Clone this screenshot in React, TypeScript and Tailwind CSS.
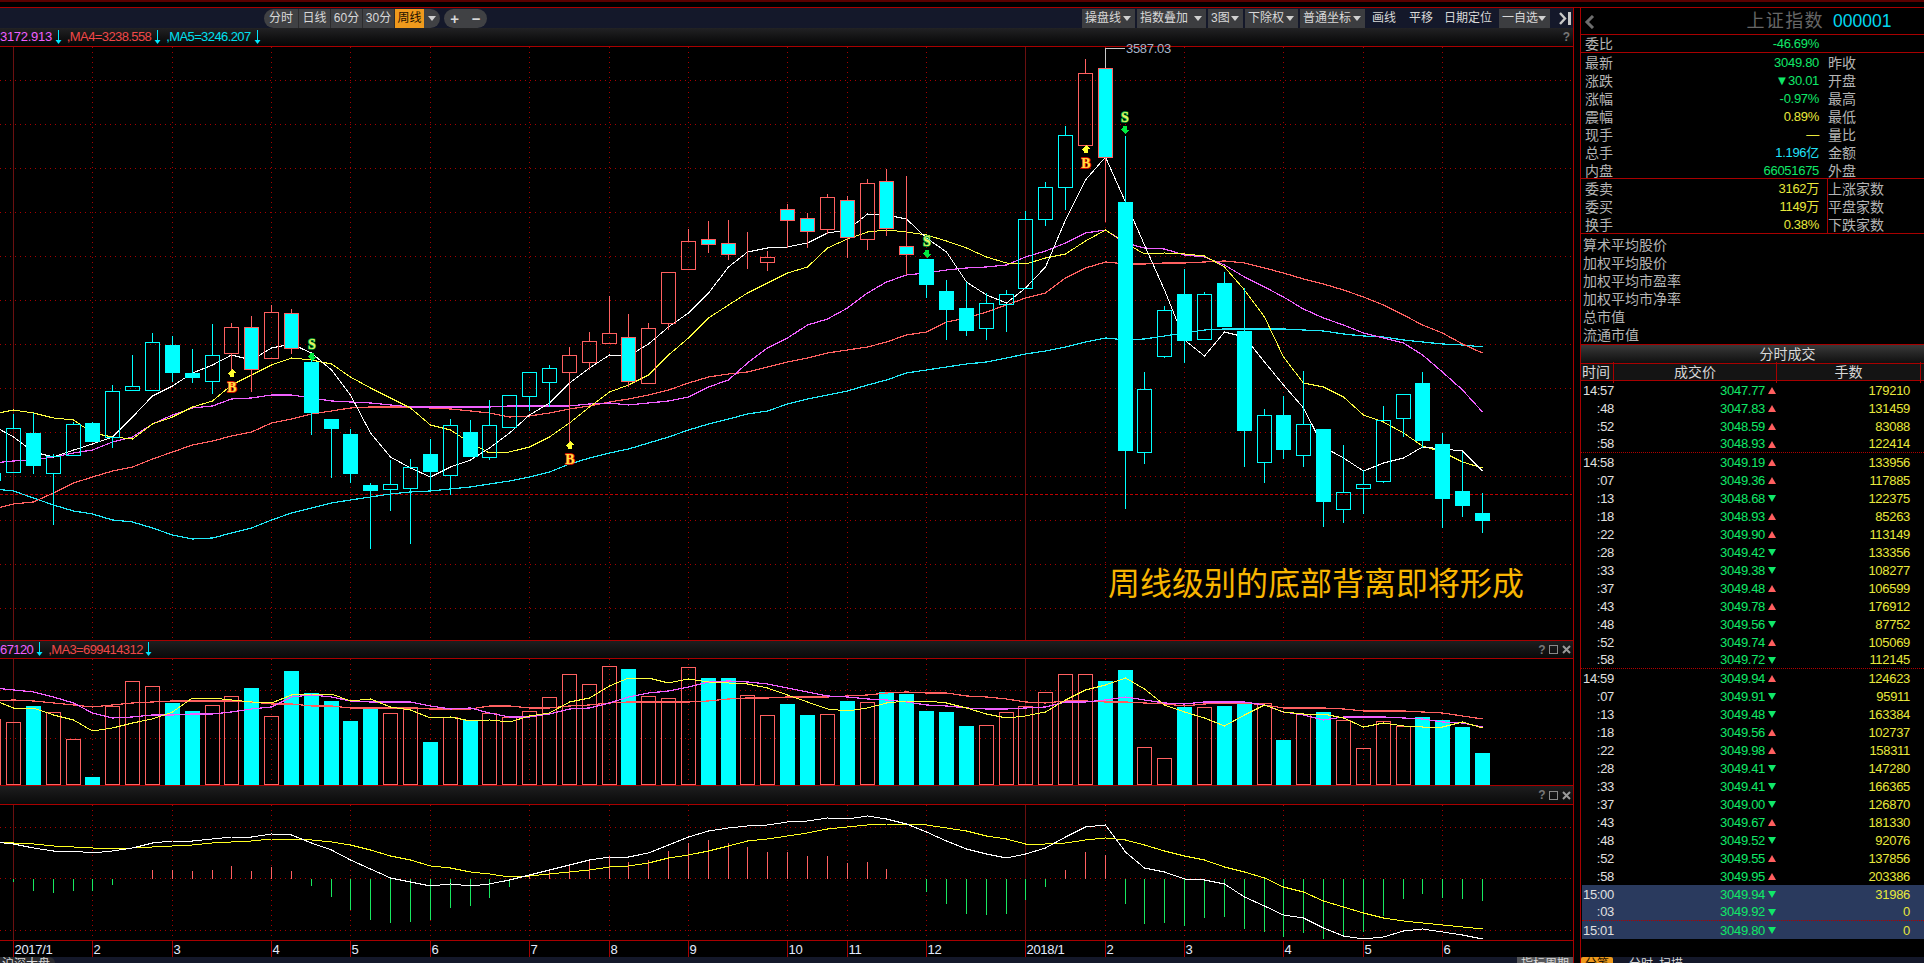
import React from "react";

// x position of weekly bar i (i = -1 is the partial bar on the left edge)
const xAt = (i: number) => Math.floor(13.5 + 19.85 * i) + 0.5;
const RED = "#a80000";
const UP = "#ff6060";
const CYAN = "#00ffff";

// c = hollow cyan, f = solid cyan, r = hollow red, m = cyan with red outline
type Candle = [string, number, number, number, number];
const candles: Candle[] = [
  ["c", 473, 480, 473, 480],
  ["c", 428, 472, 414, 472], ["f", 433, 466, 413, 474], ["c", 456, 473, 454, 525], ["c", 424, 455, 422, 455],
  ["f", 423, 442, 422, 442], ["c", 391, 437, 385, 448], ["c", 386, 390, 355, 390], ["c", 342, 390, 333, 390],
  ["f", 345, 373, 336, 382], ["f", 373, 378, 349, 383], ["c", 355, 381, 324, 394], ["r", 327, 353, 323, 372],
  ["m", 327, 369, 316, 392], ["r", 312, 358, 305, 359], ["m", 313, 348, 309, 354], ["f", 362, 413, 360, 435],
  ["f", 419, 429, 419, 478], ["f", 434, 474, 429, 483], ["f", 485, 491, 483, 549], ["c", 484, 489, 460, 511],
  ["c", 467, 488, 459, 544], ["f", 454, 472, 439, 492], ["c", 425, 475, 419, 495], ["f", 432, 457, 420, 457],
  ["c", 425, 457, 400, 460], ["c", 395, 427, 395, 427], ["c", 372, 396, 372, 411], ["c", 368, 382, 365, 407],
  ["r", 355, 372, 347, 442], ["r", 341, 362, 332, 370], ["r", 333, 343, 296, 343], ["m", 337, 381, 314, 387],
  ["r", 328, 383, 323, 383], ["r", 272, 323, 272, 330], ["r", 241, 269, 229, 269], ["m", 239, 244, 221, 253],
  ["m", 243, 254, 220, 260], ["r", 254, 254, 232, 269], ["r", 257, 262, 251, 271], ["m", 209, 220, 204, 248],
  ["m", 218, 231, 213, 248], ["r", 197, 229, 194, 234], ["m", 200, 237, 196, 258], ["r", 183, 239, 179, 250],
  ["m", 181, 228, 169, 236], ["m", 246, 254, 176, 275], ["f", 259, 285, 259, 298], ["f", 291, 310, 280, 340],
  ["f", 308, 331, 282, 336], ["c", 303, 328, 293, 340], ["c", 294, 304, 290, 332], ["c", 219, 288, 211, 288],
  ["c", 187, 219, 182, 226], ["c", 135, 187, 126, 210], ["r", 73, 145, 59, 145], ["m", 68, 157, 48, 222],
  ["f", 202, 451, 136, 509], ["c", 389, 452, 372, 464], ["c", 310, 356, 306, 358], ["f", 294, 341, 269, 363],
  ["c", 294, 339, 292, 339], ["f", 283, 327, 272, 327], ["f", 331, 431, 288, 467], ["c", 415, 462, 409, 483],
  ["f", 415, 450, 396, 459], ["c", 424, 455, 371, 467], ["f", 429, 502, 429, 527], ["c", 492, 509, 445, 523],
  ["c", 484, 488, 470, 514], ["c", 420, 481, 406, 483], ["c", 394, 418, 394, 437], ["f", 383, 441, 372, 448],
  ["f", 444, 499, 433, 528], ["f", 491, 506, 452, 517], ["f", 513, 521, 493, 533],
];

const ma1 = [426, 437, 452, 457, 450, 444, 437, 417, 396, 386, 373, 365, 355, 360, 348, 344, 353, 370, 395, 433, 457, 468, 477, 467, 460, 448, 433, 415, 403, 383, 368, 355, 356, 344, 327, 313, 293, 267, 252, 248, 247, 243, 233, 230, 214, 215, 219, 238, 252, 282, 295, 303, 288, 267, 220, 180, 157, 202, 245, 290, 340, 356, 332, 337, 362, 385, 408, 447, 458, 471, 463, 458, 447, 449, 451, 471];
const ma2 = [414, 410, 413, 418, 420, 433, 437, 439, 424, 417, 407, 401, 385, 375, 365, 358, 360, 364, 377, 388, 398, 408, 425, 430, 443, 453, 452, 447, 437, 423, 407, 392, 385, 375, 355, 338, 318, 305, 293, 283, 273, 267, 248, 239, 232, 230, 232, 235, 241, 248, 257, 263, 264, 258, 254, 241, 230, 243, 254, 253, 254, 256, 267, 290, 317, 357, 383, 387, 397, 415, 422, 433, 446, 452, 462, 468];
const ma3 = [463, 461, 460, 457, 453, 450, 442, 437, 424, 415, 408, 406, 399, 398, 395, 395, 398, 401, 402, 403, 405, 407, 407, 407, 407, 407, 406, 406, 406, 406, 404, 403, 405, 403, 401, 397, 387, 380, 363, 348, 338, 325, 319, 308, 293, 282, 275, 273, 270, 268, 267, 265, 257, 251, 243, 233, 230, 243, 248, 249, 255, 257, 265, 277, 287, 297, 309, 318, 325, 333, 338, 343, 355, 372, 390, 412];
const ma4 = [509, 504, 502, 493, 483, 477, 471, 467, 459, 452, 445, 441, 436, 432, 423, 419, 414, 411, 408, 407, 407, 407, 408, 409, 411, 413, 417, 416, 413, 409, 406, 402, 399, 395, 390, 383, 377, 374, 372, 367, 362, 358, 353, 350, 347, 342, 335, 332, 322, 318, 312, 305, 298, 293, 278, 268, 262, 264, 264, 263, 263, 262, 261, 263, 268, 273, 279, 284, 290, 297, 305, 315, 325, 333, 344, 353];
const ma5 = [489, 491, 498, 505, 511, 514, 520, 522, 528, 535, 539, 538, 533, 528, 520, 513, 508, 503, 500, 497, 494, 492, 491, 489, 487, 484, 481, 477, 472, 464, 458, 453, 449, 443, 437, 430, 424, 419, 414, 411, 404, 399, 395, 391, 385, 380, 373, 370, 367, 364, 362, 358, 354, 351, 347, 342, 338, 340, 339, 336, 333, 330, 329, 329, 329, 329, 330, 331, 334, 336, 337, 340, 342, 344, 345, 347];

// Volume bars, the listed indexes are solid cyan and the rest hollow red
const volTops = [719, 722, 706, 712, 739, 777, 706, 681, 686, 703, 711, 705, 696, 688, 716, 671, 693, 701, 721, 707, 713, 707, 742, 717, 720, 713, 717, 711, 697, 674, 684, 666, 669, 696, 698, 667, 678, 678, 695, 715, 704, 715, 714, 701, 702, 692, 694, 711, 712, 726, 725, 712, 706, 692, 674, 674, 681, 670, 747, 758, 707, 707, 706, 702, 703, 740, 714, 712, 720, 748, 721, 726, 717, 720, 727, 753];
const volSolid = new Set([1, 4, 8, 9, 12, 14, 15, 16, 17, 18, 21, 23, 31, 35, 36, 39, 40, 42, 44, 45, 46, 47, 48, 55, 56, 59, 61, 62, 64, 66, 71, 72, 73, 74]);
const volYellow = [700, 708, 708, 715, 720, 731, 728, 723, 719, 712, 698, 698, 700, 702, 703, 695, 694, 694, 701, 699, 707, 710, 718, 717, 721, 720, 722, 716, 713, 702, 698, 686, 678, 678, 683, 679, 682, 683, 684, 688, 695, 702, 709, 711, 708, 703, 701, 701, 703, 708, 714, 718, 716, 712, 700, 690, 685, 678, 689, 705, 712, 718, 726, 715, 705, 712, 714, 714, 718, 727, 723, 726, 727, 727, 722, 728];
const volPink = [688, 690, 692, 697, 703, 713, 718, 717, 715, 715, 714, 714, 712, 709, 707, 697, 695, 697, 701, 702, 702, 702, 706, 709, 708, 713, 717, 717, 714, 709, 708, 703, 697, 693, 691, 687, 682, 681, 682, 684, 688, 692, 696, 697, 699, 700, 702, 705, 706, 708, 709, 709, 708, 707, 702, 702, 700, 697, 700, 703, 704, 702, 702, 702, 705, 712, 715, 720, 717, 717, 717, 718, 719, 722, 723, 727];
const volRed = [701, 700, 701, 703, 705, 707, 705, 703, 702, 701, 701, 701, 701, 702, 704, 704, 706, 706, 708, 708, 708, 708, 709, 709, 709, 706, 706, 708, 708, 706, 705, 703, 702, 702, 702, 702, 701, 699, 698, 698, 697, 697, 697, 696, 695, 693, 692, 693, 693, 696, 697, 699, 702, 703, 701, 701, 702, 702, 703, 704, 706, 704, 703, 703, 705, 708, 708, 708, 709, 711, 711, 711, 712, 713, 716, 719];

const macdWhite = [842, 844, 848, 851, 851, 853, 851, 848, 843, 841, 841, 839, 837, 837, 834, 835, 843, 850, 860, 869, 878, 882, 886, 884, 886, 884, 880, 875, 870, 865, 860, 857, 857, 853, 845, 837, 831, 828, 826, 825, 822, 821, 818, 819, 816, 819, 824, 832, 841, 849, 854, 858, 854, 848, 837, 827, 825, 852, 868, 872, 879, 880, 884, 897, 906, 915, 918, 928, 936, 939, 937, 931, 929, 932, 935, 939];
const macdYellow = [842, 843, 844, 846, 847, 848, 849, 848, 847, 846, 845, 843, 842, 841, 839, 839, 840, 842, 845, 850, 856, 860, 866, 868, 872, 874, 877, 876, 874, 872, 870, 867, 866, 863, 858, 855, 851, 846, 841, 839, 836, 833, 829, 827, 825, 824, 824, 825, 828, 831, 836, 839, 844, 844, 843, 840, 838, 840, 845, 851, 856, 860, 867, 872, 878, 887, 892, 901, 907, 913, 918, 921, 923, 925, 927, 929];
// Histogram length from the zero line, positive draws green downward
const macdHist = [0, 3, 12, 14, 12, 12, 6, 0, -9, -9, -8, -9, -13, -8, -12, -8, 7, 18, 31, 41, 44, 43, 41, 29, 27, 19, 8, -4, -9, -15, -20, -23, -17, -19, -28, -36, -39, -36, -32, -27, -27, -23, -23, -16, -17, -10, 0, 13, 25, 35, 36, 35, 21, 8, -9, -27, -24, 25, 45, 44, 47, 39, 38, 50, 53, 58, 54, 60, 58, 53, 37, 20, 15, 19, 20, 22];

const monthTicks: [number, string][] = [
  [0, "2017/1"], [4, "2"], [8, "3"], [13, "4"], [17, "5"], [21, "6"], [26, "7"], [30, "8"], [34, "9"],
  [39, "10"], [42, "11"], [46, "12"], [51, "2018/1"], [55, "2"], [59, "3"], [64, "4"], [68, "5"], [72, "6"],
];

const priceGrid = [80, 124, 168, 212, 256, 300, 344, 388, 432, 476, 520, 564, 608];

type Trade = [string, string, "u" | "d", string];
const trades: Trade[] = [
  ["14:57", "3047.77", "u", "179210"], [":48", "3047.83", "u", "131459"], [":52", "3048.59", "u", "83088"], [":58", "3048.93", "u", "122414"],
  ["14:58", "3049.19", "u", "133956"], [":07", "3049.36", "u", "117885"], [":13", "3048.68", "d", "122375"], [":18", "3048.93", "u", "85263"],
  [":22", "3049.90", "u", "113149"], [":28", "3049.42", "d", "133356"], [":33", "3049.38", "d", "108277"], [":37", "3049.48", "u", "106599"],
  [":43", "3049.78", "u", "176912"], [":48", "3049.56", "d", "87752"], [":52", "3049.74", "u", "105069"], [":58", "3049.72", "d", "112145"],
  ["14:59", "3049.94", "u", "124623"], [":07", "3049.91", "d", "95911"], [":13", "3049.48", "d", "163384"], [":18", "3049.56", "u", "102737"],
  [":22", "3049.98", "u", "158311"], [":28", "3049.41", "d", "147280"], [":33", "3049.41", "d", "166365"], [":37", "3049.00", "d", "126870"],
  [":43", "3049.67", "u", "181330"], [":48", "3049.52", "d", "92076"], [":52", "3049.55", "u", "137856"], [":58", "3049.95", "u", "203386"],
  ["15:00", "3049.94", "d", "31986"], [":03", "3049.92", "d", "0"], ["15:01", "3049.80", "d", "0"],
];

function Line({ ys, color, width = 1 }: { ys: number[]; color: string; width?: number }) {
  const pts = ys.map((y, k) => `${xAt(k - 1)},${y}`).join(" ");
  return <polyline points={pts} fill="none" stroke={color} strokeWidth={width} />;
}

function Grid({ top, bottom, rows }: { top: number; bottom: number; rows: number[] }) {
  return (
    <g>
      {rows.map((y) => (
        <line key={y} x1={0} x2={1572} y1={y + 0.5} y2={y + 0.5} stroke={RED} strokeDasharray="1 4" />
      ))}
      {monthTicks.map(([i, label]) => {
        const solid = label.includes("/");
        return (
          <line
            key={`${i}-${label}`}
            x1={xAt(i)}
            x2={xAt(i)}
            y1={top}
            y2={bottom}
            stroke={solid ? "#6a1010" : RED}
            strokeDasharray={solid ? undefined : "1 4"}
          />
        );
      })}
    </g>
  );
}

function CandleMark({ c, i }: { c: Candle; i: number }) {
  const [kind, top, bot, hi, lo] = c;
  const x = xAt(i);
  const stem = kind === "r" || kind === "m" ? UP : CYAN;
  const fill = kind === "m" ? CYAN : "none";
  return (
    <g>
      <line x1={x} x2={x} y1={hi} y2={top} stroke={stem} />
      <line x1={x} x2={x} y1={bot} y2={lo} stroke={stem} />
      {kind === "f" ? (
        <rect x={x - 7.5} y={top} width={15} height={bot - top} fill={CYAN} />
      ) : (
        <rect x={x - 7} y={top + 0.5} width={14} height={Math.max(bot - top, 0)} fill={fill} stroke={stem} />
      )}
    </g>
  );
}

function SignalMark({ x, y, ay, kind }: { x: number; y: number; ay: number; kind: "S" | "B" }) {
  const sell = kind === "S";
  const arrow = sell
    ? `${x - 1.5},${ay - 4} ${x + 1.5},${ay - 4} ${x + 1.5},${ay} ${x + 4},${ay} ${x},${ay + 4} ${x - 4},${ay}`
    : `${x - 1.5},${ay + 4} ${x + 1.5},${ay + 4} ${x + 1.5},${ay} ${x + 4},${ay} ${x},${ay - 4} ${x - 4},${ay}`;
  return (
    <g>
      <polygon points={arrow} fill={sell ? "#00e840" : "#ffff30"} />
      <text
        x={x}
        y={y + 5}
        textAnchor="middle"
        className="text-[14px] font-bold [font-family:'Liberation_Serif',serif] [paint-order:stroke]"
        fill={sell ? "#e8f060" : "#ffe040"}
        stroke={sell ? "#00b840" : "#f01800"}
        strokeWidth={1.4}
      >
        {kind}
      </text>
    </g>
  );
}

function PriceChart() {
  return (
    <div className="relative h-[593px]">
      <svg width={1573} height={593} viewBox="0 47 1573 593" className="block overflow-visible" shapeRendering="crispEdges">
        <Grid top={47} bottom={640} rows={priceGrid} />
        <line x1={0} x2={1572} y1={494.5} y2={494.5} stroke="#c00000" strokeDasharray="3 2" />
        <Line ys={ma5} color="#20e8f8" width={1.2} />
        <Line ys={ma4} color="#ff6060" width={1.2} />
        <Line ys={ma3} color="#f060ff" width={1.2} />
        <Line ys={ma2} color="#ffff40" />
        <Line ys={ma1} color="#ffffff" />
        {candles.map((c, k) => (
          <CandleMark key={k} c={c} i={k - 1} />
        ))}
        <polyline points="1105.5,68 1105.5,48.5 1125,48.5" fill="none" stroke="#c8c8c8" />
        <text x={1126} y={53} className="text-[13px] tracking-[-0.3px] fill-[#a8b4c8]">3587.03</text>
        <SignalMark kind="S" x={312} y={344} ay={357} />
        <SignalMark kind="S" x={927} y={241} ay={254} />
        <SignalMark kind="S" x={1125} y={117} ay={130} />
        <SignalMark kind="B" x={232} y={387} ay={373} />
        <SignalMark kind="B" x={570} y={459} ay={445} />
        <SignalMark kind="B" x={1086} y={163} ay={149} />
      </svg>
      <div className="absolute left-[1108px] top-[521px] text-[32px] leading-none text-[#f7b500]">
        周线级别的底部背离即将形成
      </div>
    </div>
  );
}

function VolumeChart() {
  return (
    <svg width={1573} height={126} viewBox="0 659 1573 126" className="block" shapeRendering="crispEdges">
      <Grid top={659} bottom={785} rows={[690, 738]} />
      {volTops.map((top, k) => {
        const i = k - 1;
        const x = xAt(i);
        return volSolid.has(i) ? (
          <rect key={k} x={x - 7.5} y={top} width={15} height={785 - top} fill={CYAN} />
        ) : (
          <rect key={k} x={x - 7} y={top + 0.5} width={14} height={784 - top} fill="none" stroke={UP} />
        );
      })}
      <Line ys={volRed} color="#ff6060" width={1.2} />
      <Line ys={volPink} color="#f060ff" width={1.2} />
      <Line ys={volYellow} color="#ffff40" />
    </svg>
  );
}

function MacdChart() {
  const zero = 878.5;
  return (
    <svg width={1573} height={135} viewBox="0 805 1573 135" className="block" shapeRendering="crispEdges">
      <Grid top={805} bottom={940} rows={[827, 878, 930]} />
      {macdHist.map((v, k) => {
        if (v === 0) return null;
        const x = xAt(k - 1);
        return <line key={k} x1={x} x2={x} y1={zero} y2={zero + v} stroke={v > 0 ? "#18e860" : "#ff6060"} />;
      })}
      <Line ys={macdYellow} color="#ffff20" />
      <Line ys={macdWhite} color="#ffffff" />
    </svg>
  );
}

function DateAxis() {
  return (
    <svg width={1573} height={16} viewBox="0 941 1573 16" className="block" shapeRendering="crispEdges">
      {monthTicks.map(([i, label]) => (
        <g key={`${i}-${label}`}>
          <line x1={xAt(i)} x2={xAt(i)} y1={941} y2={957} stroke={RED} />
          <text x={xAt(i) + 1} y={954} className="text-[13px] tracking-[-0.3px] fill-[#e4ecff]">{label}</text>
        </g>
      ))}
    </svg>
  );
}

function Caret() {
  return (
    <svg width={8} height={5} viewBox="0 0 8 5" className="shrink-0">
      <polygon points="0,0 8,0 4,5" fill="#d0d0d0" />
    </svg>
  );
}

function DownMark() {
  return (
    <svg width={7} height={15} viewBox="0 0 7 15" className="shrink-0">
      <line x1={3.5} x2={3.5} y1={0} y2={11} stroke="#00e8ff" />
      <polygon points="0.5,10 6.5,10 3.5,14" fill="#00e8ff" />
    </svg>
  );
}

function WindowIcons() {
  return (
    <div className="ml-auto flex items-center gap-[4px] pr-[2px]">
      <span className="text-[12px] font-bold leading-none text-[#777]">?</span>
      <svg width={9} height={9} viewBox="0 0 9 9">
        <rect x={0.5} y={0.5} width={8} height={8} fill="none" stroke="#8a8a8a" />
      </svg>
      <svg width={9} height={9} viewBox="0 0 9 9">
        <path d="M1 1 L8 8 M8 1 L1 8" stroke="#9a9a9a" strokeWidth={2} />
      </svg>
    </div>
  );
}

function ToolButton({ label, width }: { label: string; width: string }) {
  return (
    <div className={`flex h-[19px] items-center justify-between whitespace-nowrap bg-[#3c3d40] pl-[3px] pr-[4px] text-[12px] text-[#d8d8d8] ${width}`}>
      <span>{label}</span>
      <Caret />
    </div>
  );
}

function Toolbar() {
  return (
    <div className="flex h-[20px] items-center bg-[#14182a] text-[12px] text-[#d8d8d8]">
      <div className="ml-[264px] flex h-[19px] w-[176px] items-stretch overflow-hidden rounded-full bg-[#404144]">
        <span className="flex w-[35px] items-center justify-end border-r border-[#2c2c2e] pr-[5px]">分时</span>
        <span className="flex w-[32px] items-center justify-center border-r border-[#2c2c2e]">日线</span>
        <span className="flex w-[32px] items-center justify-center border-r border-[#2c2c2e]">60分</span>
        <span className="flex w-[32px] items-center justify-center border-r border-[#2c2c2e]">30分</span>
        <span className="flex w-[29px] items-center justify-center bg-[#f09a1c] text-[#1a1000]">周线</span>
        <span className="flex flex-1 items-center justify-center"><Caret /></span>
      </div>
      <div className="ml-[4px] flex h-[19px] w-[43px] items-center justify-around rounded-full bg-[#404144] text-[15px] font-bold text-[#d8d8d8]">
        <span className="leading-none">+</span>
        <span className="leading-none">−</span>
      </div>
      <div className="ml-auto flex items-center gap-[2px] pr-[1px]">
        <ToolButton label="操盘线" width="w-[53px]" />
        <ToolButton label="指数叠加" width="w-[69px]" />
        <ToolButton label="3图" width="w-[35px]" />
        <ToolButton label="下除权" width="w-[53px]" />
        <ToolButton label="普通坐标" width="w-[65px]" />
        <span className="ml-[5px] w-[26px] whitespace-nowrap">画线</span>
        <span className="ml-[9px] w-[26px] whitespace-nowrap">平移</span>
        <span className="ml-[7px] w-[52px] whitespace-nowrap">日期定位</span>
        <div className="ml-[1px]">
          <ToolButton label="一自选" width="w-[51px]" />
        </div>
        <svg width={13} height={13} viewBox="0 0 13 13" className="ml-[7px]">
          <path d="M1 1 L6 6.5 L1 12" fill="none" stroke="#c8c8c8" strokeWidth={2.4} />
          <rect x={9} y={0} width={3} height={13} fill="#c8c8c8" />
        </svg>
      </div>
    </div>
  );
}

function PriceLegend() {
  return (
    <div className="flex h-[18px] items-center bg-gradient-to-b from-[#222224] to-[#060606] text-[13px]">
      <span className="tracking-[-0.3px] text-[#f060ff]">3172.913</span>
      <span className="ml-[3px]"><DownMark /></span>
      <span className="ml-[5px] tracking-[-0.6px] text-[#f04848]">,MA4=3238.558</span>
      <span className="ml-[3px]"><DownMark /></span>
      <span className="ml-[5px] tracking-[-0.6px] text-[#00e0f0]">,MA5=3246.207</span>
      <span className="ml-[3px]"><DownMark /></span>
      <span className="ml-auto pr-[3px] text-[12px] font-bold text-[#777]">?</span>
    </div>
  );
}

function PanelHeader({ legend }: { legend?: boolean }) {
  return (
    <div className="flex h-full items-center bg-gradient-to-b from-[#1e1e1f] to-[#0a0a0a] text-[13px] tracking-[-0.6px]">
      {legend && (
        <>
          <span className="text-[#f060ff]">67120</span>
          <span className="ml-[3px]"><DownMark /></span>
          <span className="ml-[5px] text-[#f04848]">,MA3=699414312</span>
          <span className="ml-[2px]"><DownMark /></span>
        </>
      )}
      <WindowIcons />
    </div>
  );
}

function QuoteRow({ label, value, color, side }: { label: string; value: string; color: string; side?: string }) {
  return (
    <div className="flex h-[18px] items-center pt-[2px]">
      <div className="flex w-[234px] items-center justify-between">
        <span className="text-[14px] text-[#b4b4b4]">{label}</span>
        <span className={`text-[13px] tracking-[-0.3px] ${color}`}>{value}</span>
      </div>
      {side && <span className="ml-[9px] text-[14px] text-[#b4b4b4]">{side}</span>}
    </div>
  );
}

function TradeRow({ t, idx }: { t: Trade; idx: number }) {
  const [time, price, dir, qty] = t;
  const dotted = idx === 3 || idx === 15 || idx === 29;
  const live = idx >= 28;
  return (
    <div
      className={`flex h-[18px] items-center pt-[1px] text-[13px] tracking-[-0.3px] ${live ? "ml-[1px] bg-[#2a3a5e]" : ""} ${dotted ? "border-b border-dotted border-[#b00000]" : ""}`}
    >
      <span className={`text-right text-[#e0e0e0] ${live ? "w-[32px]" : "w-[33px]"}`}>{time}</span>
      <span className="w-[151px] text-right text-[#10e868]">{price}</span>
      <svg width={8} height={7} viewBox="0 0 8 7" className="ml-[3px]">
        {dir === "u" ? (
          <polygon points="4,0 8,7 0,7" fill="#ff5f5f" />
        ) : (
          <polygon points="0,0 8,0 4,7" fill="#10e868" />
        )}
      </svg>
      <span className="w-[134px] text-right text-[#e8e83c]">{qty}</span>
    </div>
  );
}

function SidePanel() {
  return (
    <div className="flex w-[344px] flex-col border-l border-[#a80000]">
      <div className="flex h-[27px] items-center border-b border-[#a80000]">
        <div className="flex w-[243px] items-center justify-between">
          <svg width={11} height={14} viewBox="0 0 11 14" className="ml-[3px] mt-[2px]">
            <path d="M9 1 L3 7 L9 13" fill="none" stroke="#6e6e6e" strokeWidth={3} />
          </svg>
          <span className="text-[18px] tracking-[1.4px] text-[#666]">上证指数</span>
        </div>
        <span className="ml-[9px] text-[17.5px] text-[#00d8f0]">000001</span>
      </div>
      <div className="flex h-[18px] items-center border-b border-[#a80000] pl-[4px] pt-[1px]">
        <div className="flex w-[234px] items-center justify-between">
          <span className="text-[14px] text-[#b4b4b4]">委比</span>
          <span className="text-[13px] tracking-[-0.3px] text-[#10e868]">-46.69%</span>
        </div>
      </div>
      <div className="h-[125px] pl-[4px]">
        <QuoteRow label="最新" value="3049.80" color="text-[#10e868]" side="昨收" />
        <QuoteRow label="涨跌" value="▼30.01" color="text-[#10e868]" side="开盘" />
        <QuoteRow label="涨幅" value="-0.97%" color="text-[#10e868]" side="最高" />
        <QuoteRow label="震幅" value="0.89%" color="text-[#e8e83c]" side="最低" />
        <QuoteRow label="现手" value="—" color="text-[#e8e83c]" side="量比" />
        <QuoteRow label="总手" value="1.196亿" color="text-[#20e0f8]" side="金额" />
        <QuoteRow label="内盘" value="66051675" color="text-[#10e868]" side="外盘" />
      </div>
      <div className="flex h-[56px] border-y border-[#a80000]">
        <div className="w-[246px] pl-[4px]">
          <QuoteRow label="委卖" value="3162万" color="text-[#e8e83c]" />
          <QuoteRow label="委买" value="1149万" color="text-[#e8e83c]" />
          <QuoteRow label="换手" value="0.38%" color="text-[#e8e83c]" />
        </div>
        <div className="flex-1 border-l border-[#a80000] text-[14px] text-[#b4b4b4]">
          <div className="flex h-[18px] items-center pt-[2px]">上涨家数</div>
          <div className="flex h-[18px] items-center pt-[2px]">平盘家数</div>
          <div className="flex h-[18px] items-center pt-[2px]">下跌家数</div>
        </div>
      </div>
      <div className="h-[111px] border-b border-[#a80000] pl-[2px] pt-[1px] text-[14px] text-[#b4b4b4]">
        {["算术平均股价", "加权平均股价", "加权平均市盈率", "加权平均市净率", "总市值", "流通市值"].map((s) => (
          <div key={s} className="flex h-[18px] items-center pt-[2px]">{s}</div>
        ))}
      </div>
      <div className="flex h-[19px] items-center justify-center border-b border-[#a80000] bg-gradient-to-b from-[#3a3a3a] to-[#101010] pl-[70px] text-[14px] text-[#d8d8d8]">
        分时成交
      </div>
      <div className="flex h-[17px] items-center border-b border-[#a80000] bg-[#141414] pt-[1px] text-[14px] text-[#d8d8d8]">
        <span className="w-[33px] border-r border-[#a80000] pl-[1px]">时间</span>
        <span className="w-[163px] border-r border-[#a80000] text-center">成交价</span>
        <span className="w-[144px] border-r border-[#a80000] text-center">手数</span>
      </div>
      {trades.map((t, idx) => (
        <TradeRow key={idx} t={t} idx={idx} />
      ))}
      <div className="mt-[18px] flex h-[6px] items-start overflow-hidden bg-[#14182a] text-[12px] leading-[14px] text-[#d8d8d8]">
        <span className="w-[32px] rounded-t-[2px] bg-[#f09a1c] text-center text-[#1a1000]">分笔</span>
        <span className="ml-[16px]">分时</span>
        <span className="ml-[6px]">扫描</span>
      </div>
    </div>
  );
}

export default function App() {
  return (
    <div className="flex h-[963px] w-[1924px] flex-col overflow-hidden bg-black text-[12px] [font-family:'Liberation_Sans','Noto_Sans_CJK_SC',sans-serif]">
      <div className="h-[7px] border-t-2 border-[#5a0000]" />
      <div className="flex flex-1 overflow-hidden border-t border-[#a80000]">
        <div className="flex w-[1574px] flex-col border-r border-[#a80000]">
          <Toolbar />
          <PriceLegend />
          <div className="border-t border-[#a80000]" />
          <PriceChart />
          <div className="border-t border-[#a80000]" />
          <div className="h-[17px]">
            <PanelHeader legend />
          </div>
          <div className="border-t border-[#a80000]" />
          <VolumeChart />
          <div className="border-t border-[#a80000]" />
          <div className="h-[18px]">
            <PanelHeader />
          </div>
          <div className="border-t border-[#a80000]" />
          <MacdChart />
          <div className="border-t border-[#a80000]" />
          <DateAxis />
          <div className="flex h-[6px] items-start justify-between overflow-hidden bg-[#14182a] text-[12px] leading-[14px] text-[#d8d8d8]">
            <span className="w-[55px] rounded-tr-[6px] bg-[#2a2b30] pl-[2px]">沪深大盘</span>
            <span className="w-[56px] bg-[#55565a] text-center">指标周期</span>
          </div>
        </div>
        <div className="w-[6px]" />
        <SidePanel />
      </div>
    </div>
  );
}
